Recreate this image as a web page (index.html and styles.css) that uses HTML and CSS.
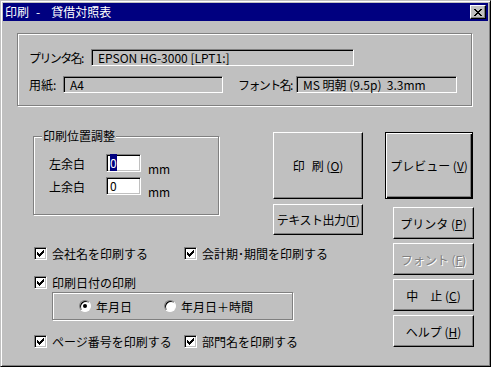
FILE: index.html
```html
<!DOCTYPE html>
<html lang="ja">
<head>
  <meta charset="UTF-8">
  <title>印刷 - 貸借対照表</title>
  <link rel="stylesheet" href="styles.css">
</head>
<body>
  <div class="window">
    <div class="titlebar">
      <span class="title">印刷<span class="dash">-</span>貸借対照表</span>
      <span class="close">
        <svg width="8" height="7" viewBox="0 0 8 7"><path d="M0 0h2v1h-2zM6 0h2v1h-2zM1 1h2v1h-2zM5 1h2v1h-2zM2 2h4v1h-4zM3 3h2v1h-2zM2 4h4v1h-4zM1 5h2v1h-2zM5 5h2v1h-2zM0 6h2v1h-2zM6 6h2v1h-2z" fill="#000"/></svg>
      </span>
    </div>

    <div class="client">
      <div class="group info">
        <div class="field-row">
          <span class="label label-printer">プリンタ名:</span>
          <span class="field field-printer">EPSON HG-3000 [LPT1:]</span>
        </div>
        <div class="field-row">
          <span class="label label-paper">用紙:</span>
          <span class="field field-paper">A4</span>
          <span class="label label-font">フォント名:</span>
          <span class="field field-font">MS 明朝 (9.5p)  3.3mm</span>
        </div>
      </div>

      <div class="lower">
        <div class="left">
          <div class="top-row">
            <div class="group pos">
              <span class="group-title">印刷位置調整</span>
              <div class="margin-row">
                <span class="margin-label">左余白</span>
                <span class="edit"><span class="sel">0</span></span>
                <span class="unit">mm</span>
              </div>
              <div class="margin-row">
                <span class="margin-label">上余白</span>
                <span class="edit">0</span>
                <span class="unit">mm</span>
              </div>
            </div>
            <div class="btn-stack">
              <button class="btn btn-print">印<span class="gap"></span>刷 (<u>O</u>)</button>
              <button class="btn btn-text">テキスト出力(<u>T</u>)</button>
            </div>
          </div>

          <div class="check-row first">
            <label class="check"><span class="box"><svg width="7" height="7" viewBox="0 0 7 7"><path d="M6 0h1v1h-1zM5 1h2v1h-2zM0 2h1v1h-1zM4 2h3v1h-3zM0 3h2v1h-2zM3 3h3v1h-3zM0 4h5v1h-5zM1 5h3v1h-3zM2 6h1v1h-1z" fill="#000"/></svg></span>会社名を印刷する</label>
            <label class="check"><span class="box"><svg width="7" height="7" viewBox="0 0 7 7"><path d="M6 0h1v1h-1zM5 1h2v1h-2zM0 2h1v1h-1zM4 2h3v1h-3zM0 3h2v1h-2zM3 3h3v1h-3zM0 4h5v1h-5zM1 5h3v1h-3zM2 6h1v1h-1z" fill="#000"/></svg></span>会計期･期間を印刷する</label>
          </div>
          <div class="check-row second">
            <label class="check"><span class="box"><svg width="7" height="7" viewBox="0 0 7 7"><path d="M6 0h1v1h-1zM5 1h2v1h-2zM0 2h1v1h-1zM4 2h3v1h-3zM0 3h2v1h-2zM3 3h3v1h-3zM0 4h5v1h-5zM1 5h3v1h-3zM2 6h1v1h-1z" fill="#000"/></svg></span>印刷日付の印刷</label>
          </div>
          <div class="group radio-group">
            <label class="radio-item"><span class="radio"><span class="dot"></span></span>年月日</label>
            <label class="radio-item"><span class="radio"></span>年月日＋時間</label>
          </div>
          <div class="check-row third">
            <label class="check"><span class="box"><svg width="7" height="7" viewBox="0 0 7 7"><path d="M6 0h1v1h-1zM5 1h2v1h-2zM0 2h1v1h-1zM4 2h3v1h-3zM0 3h2v1h-2zM3 3h3v1h-3zM0 4h5v1h-5zM1 5h3v1h-3zM2 6h1v1h-1z" fill="#000"/></svg></span>ページ番号を印刷する</label>
            <label class="check"><span class="box"><svg width="7" height="7" viewBox="0 0 7 7"><path d="M6 0h1v1h-1zM5 1h2v1h-2zM0 2h1v1h-1zM4 2h3v1h-3zM0 3h2v1h-2zM3 3h3v1h-3zM0 4h5v1h-5zM1 5h3v1h-3zM2 6h1v1h-1z" fill="#000"/></svg></span>部門名を印刷する</label>
          </div>
        </div>

        <div class="right">
          <button class="btn btn-preview">プレビュー (<u>V</u>)</button>
          <button class="btn btn-side first">プリンタ (<u>P</u>)</button>
          <button class="btn btn-side disabled">フォント (<u>F</u>)</button>
          <button class="btn btn-side">中<span class="gap wide"></span>止 (<u>C</u>)</button>
          <button class="btn btn-side">ヘルプ (<u>H</u>)</button>
        </div>
      </div>
    </div>
  </div>
</body>
</html>
```

FILE: styles.css
```css
body {
  margin: 0;
  background: #c0c0c0;
  font-family: "Noto Sans CJK JP", sans-serif;
  font-size: 12px;
  color: #000;
}

.window {
  width: 491px;
  height: 367px;
  box-sizing: border-box;
  border: 1px solid;
  border-color: #c0c0c0 #000 #000 #c0c0c0;
  box-shadow: inset 1px 1px #fff, inset -1px -1px #808080;
  padding: 2px;
  background: #c0c0c0;
}

.titlebar {
  height: 18px;
  background: #000080;
  color: #fff;
  display: flex;
  align-items: center;
  justify-content: space-between;
  padding: 0 2px;
}

.title {
  white-space: nowrap;
  line-height: 18px;
}

.dash {
  margin: 0 11px 0 7px;
}

.close {
  width: 16px;
  height: 14px;
  box-sizing: border-box;
  border: 1px solid;
  border-color: #fff #000 #000 #fff;
  box-shadow: inset -1px -1px #808080;
  background: #c0c0c0;
  display: flex;
  align-items: center;
  justify-content: center;
}

.client {
  padding: 12px 0 0 14px;
}

/* etched frame */
.group {
  position: relative;
  box-sizing: border-box;
  border: 1px solid #808080;
  box-shadow: inset 1px 1px #fff, 1px 1px #fff;
}

.info {
  width: 455px;
  height: 73px;
  padding: 15px 0 0 11px;
}

.field-row {
  display: flex;
  align-items: center;
  height: 17px;
}

.field-row + .field-row {
  margin-top: 10px;
}

.label { white-space: nowrap; }
.label-printer { width: 62px; letter-spacing: -1.6px; }
.label-paper { width: 34px; }
.label-font { width: 58px; margin-left: 15px; letter-spacing: -1.6px; }

.field {
  height: 17px;
  box-sizing: border-box;
  border: 1px solid;
  border-color: #808080 #fff #fff #808080;
  box-shadow: inset 1px 1px #000;
  padding-left: 6px;
  line-height: 15px;
  white-space: pre;
}

.field-printer { width: 263px; }
.field-paper { width: 160px; }
.field-font { width: 161px; }

.lower {
  display: flex;
  margin: 26px 0 0 16px;
}

.left { width: 352px; }

.top-row {
  display: flex;
  align-items: flex-start;
  height: 103px;
}

.pos {
  margin-top: 4px;
  width: 186px;
  height: 79px;
  padding: 17px 0 0 15px;
}

.group-title {
  position: absolute;
  top: -9px;
  left: 8px;
  padding: 0 1px;
  background: #c0c0c0;
  line-height: 16px;
}

.margin-row {
  display: flex;
  align-items: center;
  height: 18px;
}

.margin-row + .margin-row { margin-top: 5px; }

.margin-label { width: 57px; }

.edit {
  width: 35px;
  height: 18px;
  box-sizing: border-box;
  border: 1px solid;
  border-color: #808080 #fff #fff #808080;
  box-shadow: inset 1px 1px #000, inset -1px -1px #c0c0c0;
  background: #fff;
  padding-left: 3px;
  line-height: 16px;
}

.sel {
  background: #000080;
  color: #fff;
}

.unit {
  margin-left: 7px;
  align-self: flex-end;
  line-height: 12px;
  margin-bottom: -3px;
}

.btn {
  box-sizing: border-box;
  margin: 0;
  padding: 0;
  border: 1px solid;
  border-color: #fff #000 #000 #fff;
  box-shadow: inset -1px -1px #808080;
  background: #c0c0c0;
  font: inherit;
  color: #000;
  display: flex;
  align-items: center;
  justify-content: center;
  white-space: pre;
}

.gap {
  display: inline-block;
  width: 7px;
}

.gap.wide { width: 12px; }

.btn-stack {
  margin-left: 54px;
  display: flex;
  flex-direction: column;
  gap: 5px;
}

.btn-print { width: 90px; height: 67px; }
.btn-text { width: 90px; height: 31px; letter-spacing: -0.5px; }

.right {
  display: flex;
  flex-direction: column;
  align-items: flex-start;
  width: 89px;
}

.btn-preview {
  width: 88px;
  height: 67px;
  border-color: #000;
  box-shadow: inset 1px 1px #fff, inset -1px -1px #000, inset -2px -2px #808080;
}

.btn-side {
  width: 81px;
  height: 32px;
  margin: 4px 0 0 8px;
}

.btn-side.first { margin-top: 8px; }

.disabled {
  color: #808080;
  text-shadow: 1px 1px #fff;
}

.check-row {
  display: flex;
  align-items: center;
  height: 13px;
  margin-left: 1px;
}

.check-row.first { margin-top: 12px; }
.check-row.second { margin-top: 16px; }
.check-row.third { margin-top: 15px; }

.check {
  display: flex;
  align-items: center;
  width: 150px;
  white-space: nowrap;
}

.box {
  width: 13px;
  height: 13px;
  flex: none;
  box-sizing: border-box;
  border: 1px solid;
  border-color: #808080 #fff #fff #808080;
  box-shadow: inset 1px 1px #000, inset -1px -1px #c0c0c0;
  background: #fff;
  margin-right: 5px;
  display: flex;
  align-items: center;
  justify-content: center;
}

.radio-group {
  margin: 3px 0 0 19px;
  width: 241px;
  height: 28px;
  display: flex;
  align-items: center;
  padding-left: 26px;
}

.radio-item {
  display: flex;
  align-items: center;
  width: 85px;
  white-space: nowrap;
}

.radio {
  width: 12px;
  height: 12px;
  flex: none;
  box-sizing: border-box;
  border-radius: 50%;
  border: 1px solid;
  border-color: #808080 #fff #fff #808080;
  box-shadow: inset 1px 1px #000;
  background: #fff;
  margin-right: 5px;
  display: flex;
  align-items: center;
  justify-content: center;
}

.dot {
  width: 4px;
  height: 4px;
  border-radius: 50%;
  background: #000;
}
```
